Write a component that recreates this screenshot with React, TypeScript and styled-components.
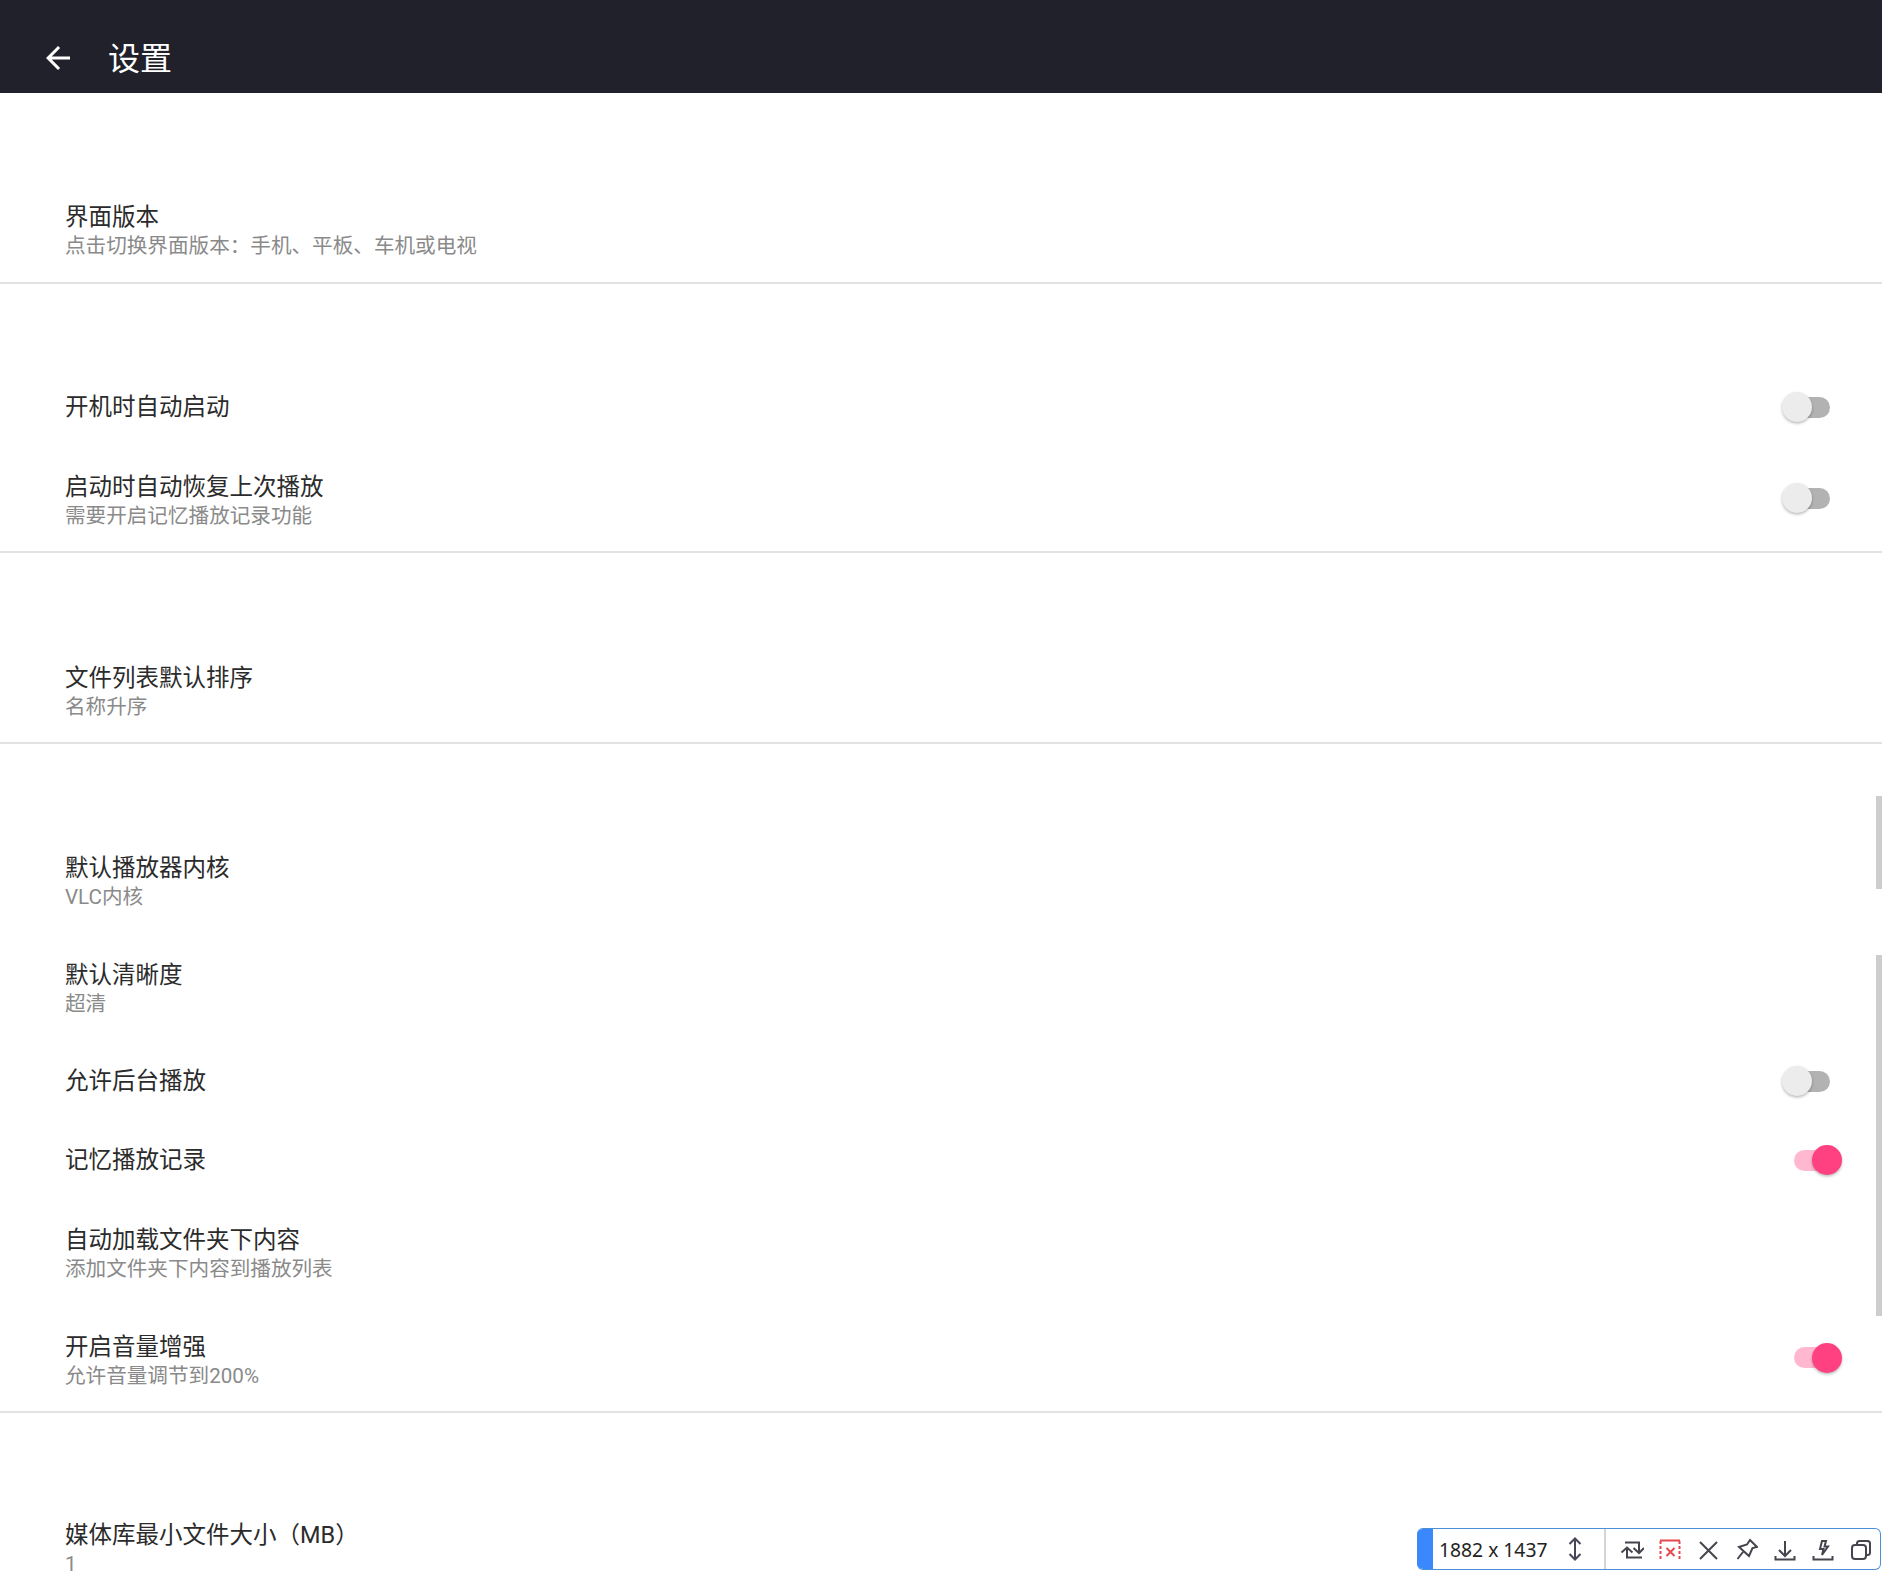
import styled, { createGlobalStyle } from 'styled-components';

const GlobalStyle = createGlobalStyle`
  html, body {
    margin: 0;
    padding: 0;
    background: #fff;
  }
  body {
    font-family: Roboto, "Noto Sans CJK SC", sans-serif;
  }
`;

const Page = styled.div`
  position: relative;
  width: 1882px;
  height: 1577px;
  overflow: hidden;
  background: #fff;
`;
const Header = styled.header`
  box-sizing: border-box;
  height: 93px;
  padding: 23px 0 0 40px;
  display: flex;
  align-items: center;
  background: #20212b;
  color: #fff;
`;
const BackIcon = styled.svg`
  width: 36px;
  height: 36px;
  fill: #fff;
  flex: none;
`;
const PageTitle = styled.h1`
  margin: 2px 0 0 32px;
  font-size: 32px;
  font-weight: 400;
  line-height: 36px;
`;
const Section = styled.section`
  padding-top: 84px;
  box-shadow: inset 0 -2px 0 #e2e2e2;
  &:last-of-type {
    padding-top: 81.7px;
    box-shadow: none;
  }
`;
const Row = styled.div<{ $double: boolean }>`
  box-sizing: border-box;
  height: ${(p) => (p.$double ? '106.8px' : '78.9px')};
  padding: 0 40px 0 65px;
  display: flex;
  align-items: center;
  justify-content: space-between;
`;
const RowText = styled.div<{ $double: boolean }>`
  display: flex;
  flex-direction: column;
  margin-top: ${(p) => (p.$double ? '3.5px' : '0')};
`;
const RowTitle = styled.div`
  font-size: 23.5px;
  line-height: 29px;
  color: #2b2b2b;
`;
const RowSub = styled.div`
  font-size: 20.6px;
  line-height: 29px;
  color: #8a8a8a;
`;
const SwitchBox = styled.div<{ $double: boolean }>`
  position: relative;
  width: 60px;
  height: 30px;
  flex: none;
  margin-bottom: ${(p) => (p.$double ? '4px' : '0')};
`;
const SwitchTrack = styled.div<{ $on: boolean }>`
  position: absolute;
  top: 4.5px;
  left: ${(p) => (p.$on ? '12px' : '6px')};
  width: 42px;
  height: 21px;
  border-radius: 11px;
  background: ${(p) => (p.$on ? '#ffb8d0' : '#b2b2b2')};
`;
const SwitchThumb = styled.div<{ $on: boolean }>`
  position: absolute;
  top: 0;
  left: ${(p) => (p.$on ? '30px' : '0')};
  width: 30px;
  height: 30px;
  border-radius: 50%;
  background: ${(p) => (p.$on ? '#ff4081' : '#ececec')};
  box-shadow: 0 1.5px 3px rgba(0, 0, 0, 0.28);
`;
const ScrollMark = styled.div<{ $top: number; $height: number }>`
  position: absolute;
  right: 0;
  top: ${(p) => p.$top}px;
  width: 6px;
  height: ${(p) => p.$height}px;
  background: #cdcdcd;
`;
const SizeBar = styled.div`
  position: absolute;
  left: 1417px;
  top: 1528px;
  box-sizing: border-box;
  width: 464px;
  height: 42px;
  display: flex;
  align-items: center;
  background: #fff;
  border: 1px solid #4a8fd8;
  border-left: 0;
  border-radius: 6px;
  overflow: hidden;
`;
const SizeHandle = styled.div`
  width: 16px;
  align-self: stretch;
  background: #3b88fd;
  flex: none;
`;
const SizeText = styled.span`
  margin-left: 6px;
  width: 124px;
  font-family: "Noto Sans", sans-serif;
  font-size: 19.3px;
  color: #222;
  white-space: nowrap;
`;
const SizeDivider = styled.div`
  width: 2px;
  align-self: stretch;
  background: #d4d4d4;
  margin: 0 14px 0 17px;
  flex: none;
`;
const ToolIcon = styled.svg<{ $danger?: boolean; $last?: boolean }>`
  width: 24px;
  height: 24px;
  flex: none;
  margin-right: ${(p) => (p.$last ? '0' : '14px')};
  fill: none;
  stroke: ${(p) => (p.$danger ? '#e5484d' : '#45454d')};
  stroke-width: 2;
`;
const ArrowIcon = styled(ToolIcon)`
  margin-right: 0;
  stroke: #4a4458;
`;

type Item = { title: string; sub?: string; on?: boolean };

const sections: Item[][] = [
  [{ title: '界面版本', sub: '点击切换界面版本：手机、平板、车机或电视' }],
  [
    { title: '开机时自动启动', on: false },
    { title: '启动时自动恢复上次播放', sub: '需要开启记忆播放记录功能', on: false },
  ],
  [{ title: '文件列表默认排序', sub: '名称升序' }],
  [
    { title: '默认播放器内核', sub: 'VLC内核' },
    { title: '默认清晰度', sub: '超清' },
    { title: '允许后台播放', on: false },
    { title: '记忆播放记录', on: true },
    { title: '自动加载文件夹下内容', sub: '添加文件夹下内容到播放列表' },
    { title: '开启音量增强', sub: '允许音量调节到200%', on: true },
  ],
  [{ title: '媒体库最小文件大小（MB）', sub: '1' }],
];

const App = () => {
  return (
    <Page>
      <GlobalStyle />
      <Header>
        <BackIcon viewBox="0 0 24 24">
          <path d="M20 11H7.83l5.59-5.59L12 4l-8 8 8 8 1.41-1.41L7.83 13H20v-2z" />
        </BackIcon>
        <PageTitle>设置</PageTitle>
      </Header>
      {sections.map((items, i) => (
        <Section key={i}>
          {items.map((item) => (
            <Row key={item.title} $double={!!item.sub}>
              <RowText $double={!!item.sub}>
                <RowTitle>{item.title}</RowTitle>
                {item.sub && <RowSub>{item.sub}</RowSub>}
              </RowText>
              {item.on !== undefined && (
                <SwitchBox $double={!!item.sub}>
                  <SwitchTrack $on={item.on} />
                  <SwitchThumb $on={item.on} />
                </SwitchBox>
              )}
            </Row>
          ))}
        </Section>
      ))}
      <ScrollMark $top={796} $height={93} />
      <ScrollMark $top={955} $height={361} />
      <SizeBar>
        <SizeHandle />
        <SizeText>1882 x 1437</SizeText>
        <ArrowIcon viewBox="0 0 24 24">
          <path d="M12 1.5v21M6.5 7L12 1.5 17.5 7M6.5 17L12 22.5 17.5 17" />
        </ArrowIcon>
        <SizeDivider />
        <ToolIcon viewBox="0 0 24 24">
          <path d="M1.5 15.5L7 10.5l5.5 5M7 10.5V20.5H22M5 5.5H19V15.5M13.5 11L19 16l5-5" />
        </ToolIcon>
        <ToolIcon viewBox="0 0 24 24" $danger>
          <path strokeDasharray="3 2" d="M2.5 4V22M21.5 4V22" />
          <path d="M2 3.5h20M8.5 11l8 8M16.5 11l-8 8" />
        </ToolIcon>
        <ToolIcon viewBox="0 0 24 24">
          <path d="M4 5l17 17M21 5L4 22" />
        </ToolIcon>
        <ToolIcon viewBox="0 0 24 24">
          <path d="M16 3l7 7-4.5 1L15 19 5 10l8-2.5zM9 15l-5.5 7" />
        </ToolIcon>
        <ToolIcon viewBox="0 0 24 24">
          <path d="M13 4v15M7 13l6 6 6-6M3.5 19v3.5h19V19" />
        </ToolIcon>
        <ToolIcon viewBox="0 0 24 24">
          <path d="M16 4h-4l-2 8h3.5L12 18l6-8.5h-3.5zM3.5 19v3.5h19V19" />
        </ToolIcon>
        <ToolIcon viewBox="0 0 24 24" $last>
          <path d="M9 8V6.5A2.5 2.5 0 0 1 11.5 4h8A2.5 2.5 0 0 1 22 6.5v9a2.5 2.5 0 0 1-2.5 2.5H18" />
          <rect x="4" y="8" width="14" height="14" rx="3" />
        </ToolIcon>
      </SizeBar>
    </Page>
  );
};

export default App;
